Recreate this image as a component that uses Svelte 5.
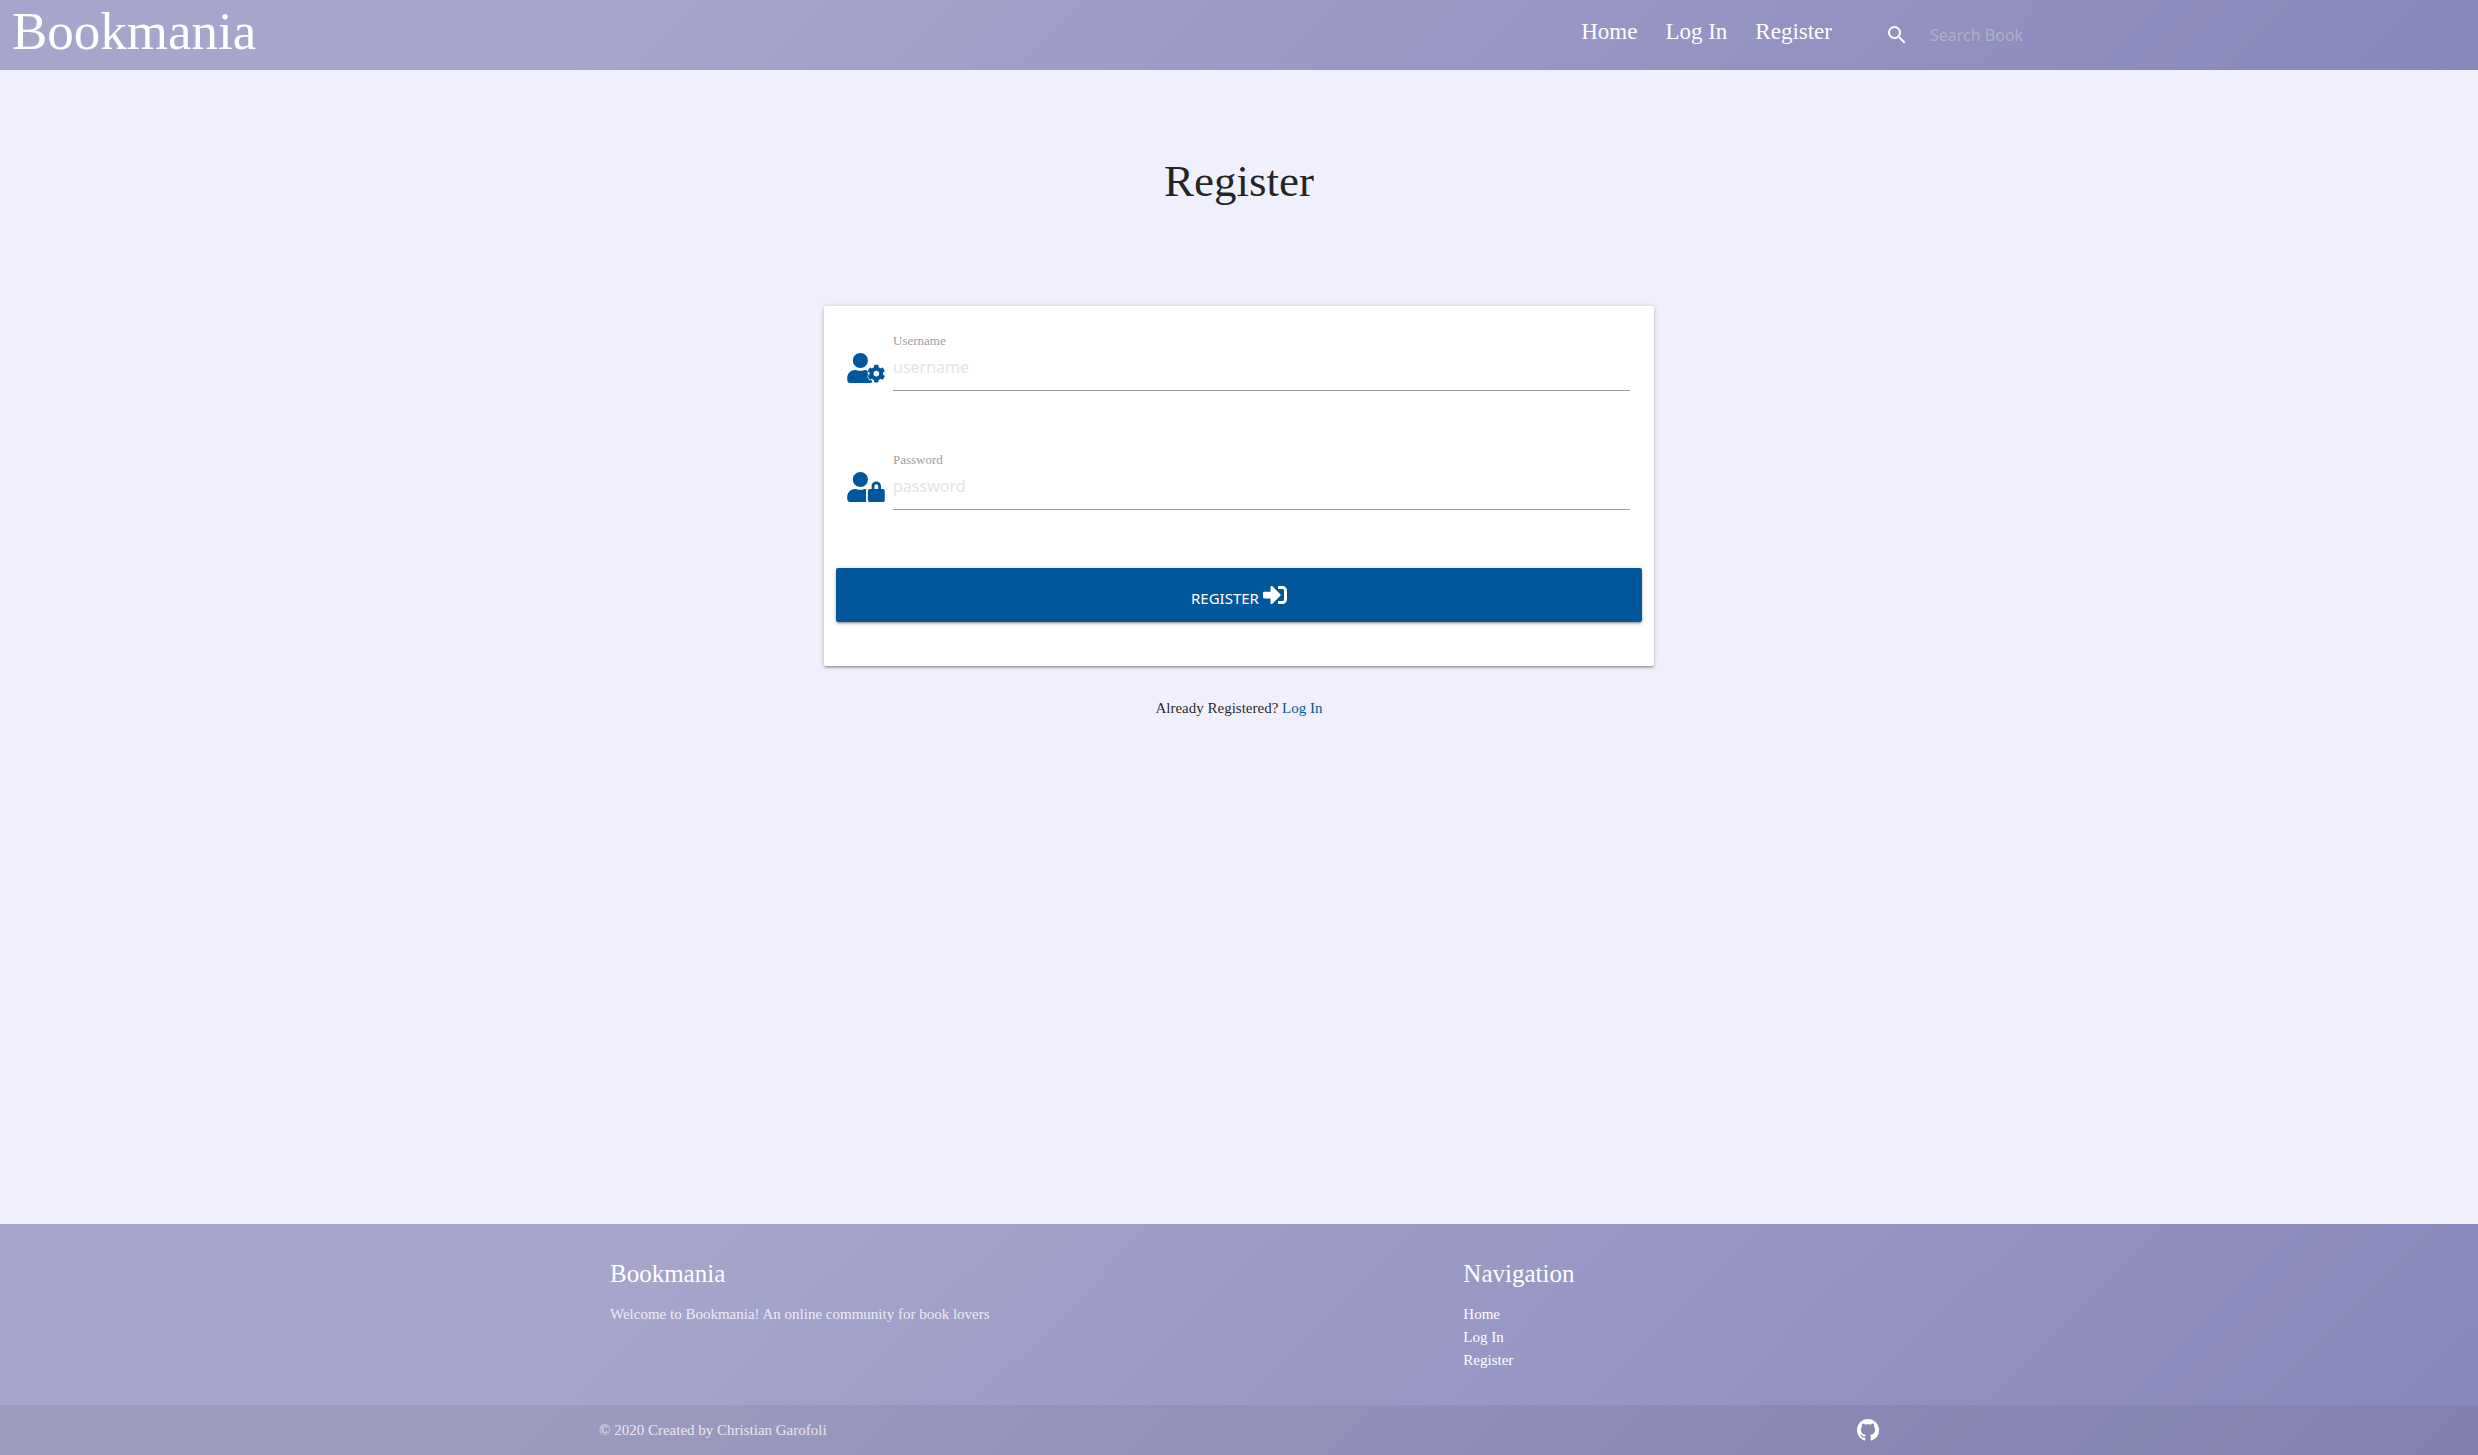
<script>
  const links = ['Home', 'Log In', 'Register'];
  const person = 'M224 256c70.7 0 128-57.3 128-128S294.700 0 224 0 96 57.300 96 128s57.300 128 128 128z';
</script>

<div class="page">
  <header>
    <a class="brand" href="#home">Bookmania</a>
    <nav>
      {#each links as link}<a href="#{link}">{link}</a>{/each}
    </nav>
    <form class="search">
      <label for="search" aria-label="Search">
        <svg viewBox="0 0 24 24" width="24" height="24"><path fill="#fff" d="M15.500 14h-.79l-.28-.27A6.471 6.471 0 0 0 16 9.500 6.500 6.500 0 1 0 9.500 16c1.610 0 3.090-.59 4.230-1.570l.27.28v.79l5 4.990L20.490 19l-4.990-5zm-6 0C7.010 14 5 11.990 5 9.500S7.010 5 9.500 5 14 7.010 14 9.500 11.990 14 9.500 14z" /></svg>
      </label>
      <input id="search" type="search" placeholder="Search Book" />
    </form>
  </header>

  <main>
    <h1>Register</h1>
    <form class="card">
      <div class="field">
        <svg viewBox="0 0 640 512" width="38" height="30">
          <path d={person} />
          <path d="M425 490c-8-6-9-14-6-26l-7-4c-26 15-34 5-52-26-18-31-23-40 2-57v-8c-25-17-20-26-6-52-12-17-28-29-43-29h-16.700a174 174 0 0 1-145.800 0h-16.700C60.200 288 0 348.200 0 422.400V464c0 26.500 21.500 48 48 48h352c9 0 18-3 25-7z" />
          <path fill-rule="evenodd" d="M610.500 373.300c2.600-14.100 2.600-28.500 0-42.600l25.800-14.900c3-1.700 4.300-5.200 3.300-8.500-6.700-21.600-18.200-41.200-33.200-57.400-2.300-2.500-6-3.100-9-1.400l-25.800 14.900c-10.900-9.300-23.400-16.500-36.900-21.300v-29.800c0-3.400-2.400-6.400-5.700-7.100-22.300-5-45-4.800-66.200 0-3.300.7-5.700 3.700-5.700 7.100v29.800c-13.500 4.800-26 12-36.900 21.300l-25.800-14.900c-2.900-1.700-6.700-1.100-9 1.400-15 16.200-26.500 35.800-33.200 57.400-1 3.300.4 6.800 3.300 8.500l25.800 14.900c-2.600 14.100-2.600 28.500 0 42.600l-25.800 14.900c-3 1.700-4.300 5.200-3.300 8.500 6.700 21.600 18.200 41.100 33.200 57.400 2.300 2.500 6 3.100 9 1.400l25.800-14.900c10.900 9.300 23.400 16.500 36.900 21.300v29.800c0 3.400 2.400 6.400 5.700 7.100 22.300 5 45 4.800 66.200 0 3.300-.7 5.700-3.700 5.700-7.100v-29.800c13.500-4.800 26-12 36.900-21.300l25.800 14.900c2.900 1.700 6.700 1.100 9-1.400 15-16.200 26.500-35.800 33.200-57.400 1-3.300-.4-6.800-3.300-8.500l-25.800-14.900zM496 400.500c-26.800 0-48.500-21.800-48.500-48.500s21.800-48.500 48.500-48.500 48.500 21.800 48.500 48.500-21.700 48.500-48.500 48.500z" />
        </svg>
        <div class="control">
          <label for="username">Username</label>
          <input id="username" type="text" placeholder="username" />
        </div>
      </div>
      <div class="field">
        <svg viewBox="0 0 640 512" width="38" height="30">
          <path d={person} />
          <path d="M320 320c0-11.100 3.100-21.400 8.100-30.500-4.800-.5-9.500-1.500-14.500-1.500h-16.700a174.080 174.080 0 0 1-145.800 0h-16.700C60.200 288 0 348.200 0 422.400V464c0 26.500 21.500 48 48 48h280.900c-5.500-9.500-8.900-20.300-8.900-32V320z" />
          <path fill-rule="evenodd" d="M608 288h-32v-48c0-44.100-35.900-80-80-80s-80 35.900-80 80v48h-32c-17.700 0-32 14.300-32 32v160c0 17.700 14.300 32 32 32h224c17.700 0 32-14.300 32-32V320c0-17.700-14.300-32-32-32zm-80 0h-64v-48c0-17.600 14.400-32 32-32s32 14.400 32 32v48z" />
        </svg>
        <div class="control">
          <label for="password">Password</label>
          <input id="password" type="password" placeholder="password" />
        </div>
      </div>
      <button type="submit">
        <span>REGISTER</span>
        <svg viewBox="0 0 512 512" width="24" height="24"><path fill="#fff" d="M416 448h-84c-6.600 0-12-5.400-12-12v-40c0-6.600 5.400-12 12-12h84c17.700 0 32-14.300 32-32V160c0-17.700-14.300-32-32-32h-84c-6.600 0-12-5.400-12-12V76c0-6.600 5.400-12 12-12h84c53 0 96 43 96 96v192c0 53-43 96-96 96zm-47-209L201 71c-15-15-41-4.500-41 17v96H24c-13.300 0-24 10.700-24 24v96c0 13.300 10.700 24 24 24h136v96c0 21.500 26 32 41 17l168-168c9.300-9.400 9.300-24.600 0-34z" /></svg>
      </button>
    </form>
    <p class="already">Already Registered? <a href="#login">Log In</a></p>
  </main>

  <footer>
    <div class="container columns">
      <section>
        <h2>Bookmania</h2>
        <p>Welcome to Bookmania! An online community for book lovers</p>
      </section>
      <section>
        <h2>Navigation</h2>
        <ul>
          {#each links as link}<li><a href="#{link}">{link}</a></li>{/each}
        </ul>
      </section>
    </div>
    <div class="copyright">
      <div class="container bar">
        <span>© 2020 Created by Christian Garofoli</span>
        <a href="#github" aria-label="GitHub">
          <svg viewBox="0 0 16 16" width="22" height="22"><path fill="#fff" d="M8 0C3.580 0 0 3.580 0 8c0 3.540 2.290 6.530 5.470 7.590.4.070.55-.17.55-.38 0-.19-.01-.82-.01-1.490-2.010.37-2.530-.49-2.690-.94-.09-.23-.48-.94-.82-1.130-.28-.15-.68-.52-.01-.53.63-.01 1.080.58 1.230.82.72 1.210 1.870.87 2.330.66.07-.52.28-.87.51-1.070-1.780-.2-3.640-.89-3.640-3.950 0-.87.31-1.590.82-2.150-.08-.2-.36-1.020.08-2.120 0 0 .67-.21 2.200.82.64-.18 1.320-.27 2-.27s1.360.09 2 .27c1.530-1.040 2.200-.82 2.200-.82.44 1.100.16 1.920.08 2.120.51.56.82 1.270.82 2.150 0 3.070-1.870 3.750-3.650 3.950.29.25.54.73.54 1.480 0 1.070-.01 1.930-.01 2.200 0 .21.15.46.55.38A8.010 8.010 0 0 0 16 8c0-4.420-3.580-8-8-8z" /></svg>
        </a>
      </div>
    </div>
  </footer>
</div>

<style>
  :global(body) { background: #f0f0fc; }
  * { box-sizing: border-box; }
  .page {
    min-height: 100vh;
    display: flex;
    flex-direction: column;
    font-family: 'Gentium Book Basic', 'Liberation Serif', serif;
    font-size: 15px;
    line-height: 22px;
    color: rgba(0, 0, 0, 0.87);
  }
  a { color: inherit; text-decoration: none; }
  svg { display: block; }
  header, footer { background: linear-gradient(135deg, #a6a5cb 0%, #a6a5cb 25%, #9897c5 60%, #8887ba 100%); color: #fff; }
  header { height: 70px; display: flex; }
  .brand { font-size: 53px; line-height: 62px; padding-left: 12px; margin-right: auto; }
  nav { display: flex; }
  nav a { font-size: 23px; line-height: 64px; padding: 0 14px; }
  .search { display: flex; align-items: center; width: 632px; padding-left: 39px; }
  .search input { flex: 1; min-width: 0; margin-left: 21px; }
  input {
    font: 16px 'Noto Sans', sans-serif;
    height: 45px;
    padding: 0;
    border: 0;
    outline: 0;
    background: transparent;
  }
  input::placeholder { color: #e4e4e6; opacity: 1; }
  .search input::placeholder { color: #b0afc9; }

  main { flex: 1; display: flex; flex-direction: column; align-items: center; }
  h1, h2 { font-weight: 400; margin: 0; }
  h1 { font-size: 45px; line-height: 50px; margin-top: 86px; }
  .card {
    width: 830px;
    max-width: 100%;
    margin-top: 100px;
    padding: 23px 12px 44px;
    background: #fff;
    border-radius: 2px;
    box-shadow: 0 2px 2px 0 rgba(0, 0, 0, 0.14), 0 3px 1px -2px rgba(0, 0, 0, 0.12), 0 1px 5px 0 rgba(0, 0, 0, 0.2);
  }
  .field { display: flex; align-items: flex-start; padding: 0 12px 0 11px; height: 119px; }
  .field svg { fill: #01579b; margin: 24px 8px 0 0; }
  .control { flex: 1; display: flex; flex-direction: column; }
  .control label { font-size: 13px; line-height: 23px; height: 16px; color: #9e9e9e; }
  .control input { height: 46px; padding-bottom: 1px; border-bottom: 1px solid #9e9e9e; }
  button {
    width: 100%;
    height: 54px;
    margin-top: 1px;
    display: flex;
    align-items: center;
    justify-content: center;
    gap: 4px;
    border: 0;
    border-radius: 2px;
    background: #01579b;
    color: #fff;
    font: 15px 'Noto Sans', sans-serif;
    box-shadow: 0 2px 2px 0 rgba(0, 0, 0, 0.14), 0 3px 1px -2px rgba(0, 0, 0, 0.12), 0 1px 5px 0 rgba(0, 0, 0, 0.2);
  }
  button span { padding-top: 6px; }
  .already { margin: 31px 0; }
  .already a { color: #01579b; }

  .container { width: 100%; max-width: 1280px; margin: 0 auto; }
  .columns { display: grid; grid-template-columns: 2fr 1fr; padding: 36px 0 33px; }
  .columns section { padding: 0 11px; }
  h2 { font-size: 25px; line-height: 28px; margin-bottom: 15px; }
  .columns p, ul { margin: 0; padding: 0; list-style: none; }
  .columns p { color: #edecf6; }
  .columns li { line-height: 23px; }
  .copyright { background: rgba(51, 51, 51, 0.08); color: rgba(255, 255, 255, 0.8); }
  .bar { height: 50px; display: flex; align-items: center; justify-content: space-between; }
</style>
